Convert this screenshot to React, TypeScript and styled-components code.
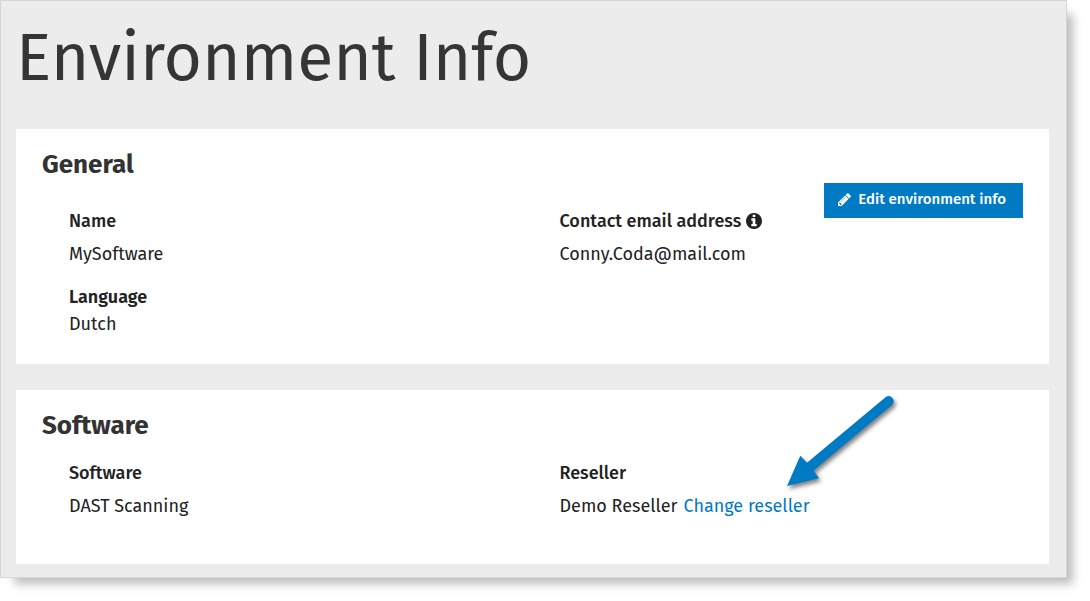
import React from "react";
import styled, { createGlobalStyle } from "styled-components";

const GlobalStyle = createGlobalStyle`
  *, *::before, *::after { box-sizing: border-box; }
  body {
    margin: 0;
    padding: 0 23px 23px 0;
    background: #fff;
    color: #222;
    font-family: "Fira Sans", Roboto, "Noto Sans", sans-serif;
    font-size: 18px;
    line-height: 27px;
  }
`;

const Page = styled.main`
  padding: 17px 17px 13px 15px;
  background: #ececec;
  border: 1px solid #d6d6d6;
  box-shadow: 10px 10px 9px -4px rgba(0, 0, 0, 0.26);
`;

const PageTitle = styled.h1`
  margin: 0 0 31px;
  font-size: 66px;
  line-height: 80px;
  font-weight: 400;
  color: #353535;
`;

const Card = styled.section<{ $bottom: number }>`
  padding: 17px 26px ${(p) => p.$bottom}px;
  background: #fff;

  & + & {
    margin-top: 26px;
  }
`;

const CardTitle = styled.h2`
  margin: 0;
  font-size: 26px;
  line-height: 38px;
  font-weight: 700;
  color: #333;
`;

const Columns = styled.div`
  display: grid;
  grid-template-columns: 1fr 1fr;
`;

const Column = styled.dl<{ $top: number }>`
  display: flex;
  flex-direction: column;
  gap: 16px;
  margin: 0;
  padding: ${(p) => p.$top}px 0 0 27px;
`;

const ActionColumn = styled.div`
  display: flex;
  justify-content: space-between;
  align-items: flex-start;
`;

const Field = styled.div<{ $gap?: number }>`
  display: flex;
  flex-direction: column;
  gap: ${(p) => p.$gap ?? 6}px;
`;

const Label = styled.dt<{ $strong?: boolean }>`
  display: flex;
  align-items: center;
  gap: 5px;
  font-weight: ${(p) => (p.$strong ? 600 : 500)};

  svg {
    margin-bottom: 2px;
  }
`;

const Value = styled.dd`
  display: flex;
  gap: 6px;
  margin: 0;
`;

const EditButton = styled.button`
  display: flex;
  align-items: center;
  gap: 7px;
  height: 35px;
  margin-top: -1px;
  padding: 0 17px 4px 14px;
  border: 0;
  background: #007ac3;
  color: #fff;
  font: 500 15px/24px "Fira Sans", Roboto, "Noto Sans", sans-serif;
  white-space: nowrap;
  cursor: pointer;

  svg {
    margin-top: 2px;
  }
`;

const LinkHolder = styled.span`
  position: relative;
`;

const TextLink = styled.a`
  color: #007ac3;
  text-decoration: none;
`;

const Pointer = styled.svg`
  position: absolute;
  right: -93px;
  bottom: 24px;
  overflow: visible;
  pointer-events: none;
  filter: drop-shadow(2px 3px 2px rgba(0, 0, 0, 0.5));
`;

const PencilIcon = () => (
  <svg width="13" height="13" viewBox="0 0 1536 1536" fill="currentColor" aria-hidden="true">
    <path d="M363 1408l91-91-235-235-91 91v107h128v128h107zm523-928q0-22-22-22-10 0-17 7l-542 542q-7 7-7 17 0 22 22 22 10 0 17-7l542-542q7-7 7-17zm-54-192l416 416-832 832H0v-416zm683 96q0 53-37 90l-166 166-416-416 166-165q36-38 90-38 53 0 91 38l235 234q37 39 37 91z" />
  </svg>
);

const InfoIcon = () => (
  <svg width="16" height="16" viewBox="0 0 1536 1536" fill="currentColor" role="img" aria-label="More information">
    <path d="M1024 1248v-160q0-14-9-23t-23-9h-96V544q0-14-9-23t-23-9H544q-14 0-23 9t-9 23v160q0 14 9 23t23 9h96v320h-96q-14 0-23 9t-9 23v160q0 14 9 23t23 9h448q14 0 23-9t9-23zM896 352V192q0-14-9-23t-23-9H672q-14 0-23 9t-9 23v160q0 14 9 23t23 9h192q14 0 23-9t9-23zm640 416q0 209-103 385.500T1153.500 1433 768 1536t-385.500-103T103 1153.500 0 768t103-385.500T382.500 103 768 0t385.500 103T1433 382.500 1536 768z" />
  </svg>
);

export default function App() {
  return (
    <>
      <GlobalStyle />
      <Page>
        <PageTitle>Environment Info</PageTitle>

        <Card $bottom={26}>
          <CardTitle>General</CardTitle>
          <Columns>
            <Column $top={24}>
              <Field>
                <Label>Name</Label>
                <Value>MySoftware</Value>
              </Field>
              <Field $gap={0}>
                <Label $strong>Language</Label>
                <Value>Dutch</Value>
              </Field>
            </Column>
            <ActionColumn>
              <Column $top={24}>
                <Field>
                  <Label>
                    Contact email address <InfoIcon />
                  </Label>
                  <Value>Conny.Coda@mail.com</Value>
                </Field>
              </Column>
              <EditButton type="button">
                <PencilIcon />
                Edit environment info
              </EditButton>
            </ActionColumn>
          </Columns>
        </Card>

        <Card $bottom={44}>
          <CardTitle>Software</CardTitle>
          <Columns>
            <Column $top={15}>
              <Field>
                <Label>Software</Label>
                <Value>DAST Scanning</Value>
              </Field>
            </Column>
            <Column $top={15}>
              <Field>
                <Label>Reseller</Label>
                <Value>
                  Demo Reseller
                  <LinkHolder>
                    <TextLink href="#reseller">Change reseller</TextLink>
                    <Pointer width="116" height="100" viewBox="0 0 116 100" aria-hidden="true">
                      <path
                        d="M0 90L13.300 59.700L20 66.800L98.800 1.100A5 5 0 0 1 105.200 8.700L26.500 74.400L32 82.300Z"
                        fill="#007ac3"
                      />
                    </Pointer>
                  </LinkHolder>
                </Value>
              </Field>
            </Column>
          </Columns>
        </Card>
      </Page>
    </>
  );
}
